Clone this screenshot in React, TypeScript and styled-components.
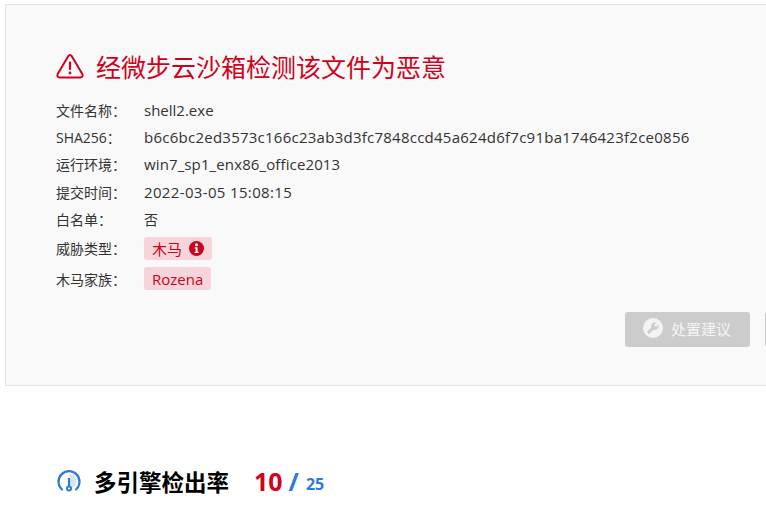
import React from "react";
import styled, { createGlobalStyle } from "styled-components";

const Global = createGlobalStyle`
  html, body { margin: 0; padding: 0; background: #fff; overflow: hidden; }
  body { font-family: "Open Sans", "Noto Sans CJK SC", sans-serif; width: 766px; height: 514px; }
`;

const Page = styled.div`
  width: 766px;
  height: 514px;
  padding: 4px 0 0 5px;
  box-sizing: border-box;
  overflow: hidden;
`;

const Panel = styled.section`
  width: 900px;
  height: 382px;
  box-sizing: border-box;
  background: #f9f9f9;
  border: 1px solid #e4e4e4;
  border-right: 0;
  padding: 44px 0 0 50px;
`;

const Heading = styled.h1`
  display: flex;
  align-items: center;
  gap: 12px;
  margin: 0 0 13px;
  height: 34px;
  font-size: 25px;
  font-weight: 400;
  color: #d0021b;
`;

const Rows = styled.div`
  display: flex;
  flex-direction: column;
`;

const Row = styled.div<{ $h?: number }>`
  display: flex;
  align-items: center;
  height: ${(p) => p.$h ?? 27.4}px;
  font-size: 14px;
  color: #333;
`;

const Label = styled.span`
  width: 88px;
  flex: none;
`;

const Value = styled.span<{ $track?: number }>`
  font-size: 15px;
  letter-spacing: ${(p) => p.$track ?? 0}px;
`;

const Tag = styled.span`
  display: inline-flex;
  align-items: center;
  gap: 7px;
  height: 23px;
  padding: 0 8px;
  border-radius: 3px;
  background: #f5d5da;
  color: #d0021b;
  font-size: 15px;
`;

const Actions = styled.div`
  display: flex;
  gap: 15px;
  margin: 18px 0 0 569px;
`;

const Action = styled.button`
  display: flex;
  align-items: center;
  gap: 8px;
  width: 125px;
  height: 35px;
  padding: 0 0 2px 18px;
  border: 0;
  border-radius: 3px;
  background: #cccccc;
  color: #f4f4f4;
  font: inherit;
  font-size: 15px;
`;

const Section = styled.section`
  display: flex;
  align-items: center;
  margin: 75px 0 0 52px;
  height: 40px;
`;

const SectionTitle = styled.h2`
  margin: 0 0 0 13px;
  font-size: 22.5px;
  font-weight: 700;
  color: #000;
`;

const Count = styled.span`
  margin-left: 25px;
  font-size: 25px;
  font-weight: 700;
  color: #d0021b;
`;

const Slash = styled.span`
  margin-left: 6px;
  font-size: 25px;
  font-weight: 700;
  color: #2f7bd3;
`;

const Total = styled.span`
  margin: 6px 0 0 7px;
  font-size: 16px;
  font-weight: 700;
  color: #2f7bd3;
`;

const Warning = () => (
  <svg width="28" height="26" viewBox="0 0 28 26" fill="none">
    <path d="M12.2 3.2 Q14 0.8 15.8 3.2 L26.3 21 Q27.5 24 24.6 24.4 H3.4 Q0.5 24 1.7 21 Z" stroke="#d0021b" strokeWidth="2" strokeLinejoin="round" />
    <rect x="12.9" y="8.5" width="2.2" height="8.5" rx="1" fill="#d0021b" />
    <circle cx="14" cy="20" r="1.4" fill="#d0021b" />
  </svg>
);

const Info = () => (
  <svg width="15" height="15" viewBox="0 0 14 14">
    <circle cx="7" cy="7" r="7" fill="#d0021b" />
    <circle cx="7" cy="3.6" r="1.4" fill="#fff" />
    <path d="M5.3 5.9 H8 V10 H9 V11.2 H5.2 V10 H6.2 V7.1 H5.3 Z" fill="#fff" />
  </svg>
);

const Wrench = () => (
  <svg width="20" height="20" viewBox="0 0 20 20">
    <circle cx="10" cy="10" r="10" fill="#f4f4f4" />
    <path d="M15.4 6.6 L13 9 L11 7 L13.4 4.6 A4 4 0 0 0 8.2 9.7 L4.6 13.3 A1.5 1.5 0 0 0 6.7 15.4 L10.3 11.8 A4 4 0 0 0 15.4 6.6 Z" fill="#cccccc" />
  </svg>
);

const Gauge = () => (
  <svg width="24" height="24" viewBox="0 0 24 24" fill="none">
    <path d="M12 5 A7.5 7.5 0 0 1 18 17 L14 19 Z" fill="#d5e5f7" />
    <path d="M5 20.5 A10.5 10.5 0 1 1 19 20.5" stroke="#2f7bd3" strokeWidth="2.2" strokeLinecap="round" />
    <rect x="10.9" y="9" width="2.2" height="9" fill="#2f7bd3" />
    <circle cx="12" cy="19.5" r="3" fill="#2f7bd3" />
    <circle cx="12" cy="19.5" r="1" fill="#fff" />
  </svg>
);

export default function App() {
  return (
    <>
      <Global />
      <Page>
        <Panel>
          <Heading>
            <Warning />
            经微步云沙箱检测该文件为恶意
          </Heading>
          <Rows>
            <Row><Label>文件名称：</Label><Value>shell2.exe</Value></Row>
            <Row><Label>SHA256：</Label><Value $track={0.25}>b6c6bc2ed3573c166c23ab3d3fc7848ccd45a624d6f7c91ba1746423f2ce0856</Value></Row>
            <Row><Label>运行环境：</Label><Value $track={0.12}>win7_sp1_enx86_office2013</Value></Row>
            <Row><Label>提交时间：</Label><Value $track={0.35}>2022-03-05 15:08:15</Value></Row>
            <Row><Label>白名单：</Label>否</Row>
            <Row $h={31}><Label>威胁类型：</Label><Tag>木马<Info /></Tag></Row>
            <Row $h={30}><Label>木马家族：</Label><Tag>Rozena</Tag></Row>
          </Rows>
          <Actions>
            <Action><Wrench />处置建议</Action>
            <Action />
          </Actions>
        </Panel>
        <Section>
          <Gauge />
          <SectionTitle>多引擎检出率</SectionTitle>
          <Count>10</Count>
          <Slash>/</Slash>
          <Total>25</Total>
        </Section>
      </Page>
    </>
  );
}
